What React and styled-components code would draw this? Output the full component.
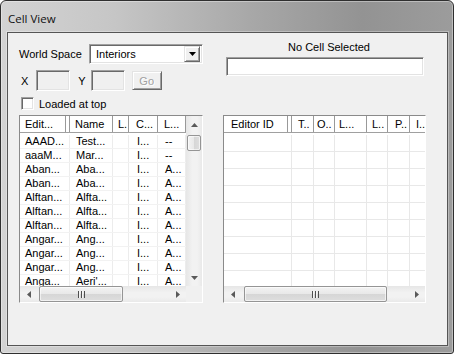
import React from "react";
import styled, { createGlobalStyle } from "styled-components";

const GlobalStyle = createGlobalStyle`
  html, body {
    margin: 0;
    padding: 0;
    background: #fff;
  }
  body {
    font-family: "Liberation Sans", Arial, sans-serif;
    font-size: 11px;
    color: #000;
  }
  * {
    box-sizing: border-box;
  }
`;

const Window = styled.div`
  width: 454px;
  height: 354px;
  display: flex;
  flex-direction: column;
  border: 1px solid #2f2f2f;
  border-radius: 6px 6px 3px 3px;
  background: linear-gradient(
    90deg,
    #d3d3d3 0%,
    #c6c6c6 25%,
    #a8a8a8 55%,
    #939393 80%,
    #9c9c9c 100%
  );
  box-shadow: inset 0 0 0 1px rgba(255, 255, 255, 0.35);
  overflow: hidden;
`;

const TitleBar = styled.div`
  flex: none;
  height: 31px;
  padding: 3px 0 0 7px;
  display: flex;
  align-items: center;
  font-family: "Open Sans", "Noto Sans", sans-serif;
  font-size: 11.5px;
  color: #111;
`;

const Client = styled.div`
  flex: 1;
  margin: 0 5px 7px 6px;
  padding: 8px 0 0 11px;
  display: flex;
  flex-direction: column;
  background: #f0f0f0;
  border: 1px solid #555;
  box-shadow: 0 0 0 1px rgba(255, 255, 255, 0.3);
`;

const TopArea = styled.div`
  display: grid;
  grid-template-columns: 184px 198px;
  column-gap: 23px;
`;

const Controls = styled.div`
  display: flex;
  flex-direction: column;
  padding-top: 3px;
`;

const Row = styled.div`
  display: flex;
  align-items: center;
  height: ${(p) => p.$h}px;
  margin-top: ${(p) => p.$mt || 0}px;
  justify-content: ${(p) => (p.$spread ? "space-between" : "flex-start")};
`;

const Label = styled.span`
  margin-left: ${(p) => p.$ml || 0}px;
  white-space: nowrap;
`;

const sunken = `
  border: 1px solid;
  border-color: #a0a0a0 #ffffff #ffffff #a0a0a0;
  box-shadow: inset 1px 1px 0 #696969, inset -1px -1px 0 #e3e3e3;
`;

const raised = `
  border: 1px solid;
  border-color: #e3e3e3 #696969 #696969 #e3e3e3;
  box-shadow: inset 1px 1px 0 #ffffff, inset -1px -1px 0 #a0a0a0;
`;

const Combo = styled.div`
  width: 114px;
  height: 20px;
  display: flex;
  align-items: center;
  justify-content: space-between;
  padding: 0 2px 0 6px;
  background: #fff;
  ${sunken}
`;

const DropButton = styled.div`
  width: 16px;
  height: 16px;
  display: flex;
  align-items: center;
  justify-content: center;
  background: #f0f0f0;
  ${raised}
`;

const Field = styled.div`
  width: 34px;
  height: 21px;
  margin-left: ${(p) => p.$ml}px;
  background: ${(p) => (p.$disabled ? "#f0f0f0" : "#fff")};
  ${sunken}
`;

const Button = styled.div`
  width: 30px;
  height: 19px;
  margin-left: 7px;
  display: flex;
  align-items: center;
  justify-content: center;
  background: #f0f0f0;
  color: #a0a0a0;
  text-shadow: 1px 1px 0 #fff;
  ${raised}
`;

const Check = styled.div`
  width: 13px;
  height: 13px;
  margin-left: 2px;
  background: #fff;
  ${sunken}
`;

const Selection = styled.div`
  display: flex;
  flex-direction: column;
`;

const Caption = styled.div`
  height: 13px;
  line-height: 13px;
  padding-left: 8px;
  text-align: center;
`;

const TextBox = styled.div`
  margin-top: 3px;
  height: 19px;
  background: #fff;
  ${sunken}
`;

const Lists = styled.div`
  display: flex;
  gap: 20px;
  margin-top: 5px;
  height: 188px;
`;

const ListView = styled.div`
  width: ${(p) => p.$w}px;
  height: 100%;
  display: grid;
  grid-template-columns: ${(p) => (p.$vscroll ? "1fr 16px" : "1fr")};
  grid-template-rows: 1fr 16px;
  border: 1px solid;
  border-color: #8a8a8a #ffffff #ffffff #8a8a8a;
  background: #fff;
`;

const Content = styled.div`
  display: flex;
  flex-direction: column;
  overflow: hidden;
  min-width: 0;
`;

const Header = styled.div`
  display: flex;
  flex: none;
  height: 17px;
  border-bottom: 1px solid #a0a0a0;
  background: #fff;
`;

const HeaderCell = styled.div`
  flex: ${(p) => (p.$w ? `0 0 ${p.$w}px` : "1")};
  padding-left: ${(p) => p.$pad}px;
  line-height: 16px;
  white-space: nowrap;
  overflow: hidden;
  border-right: ${(p) => (p.$w ? "1px solid #999" : "none")};
  box-shadow: ${(p) =>
    p.$dbl ? "inset -3px 0 0 #fff, inset -4px 0 0 #999" : "none"};
`;

const Body = styled.div`
  flex: 1;
  padding-top: 2px;
  overflow: hidden;
`;

const DataRow = styled.div`
  display: flex;
  height: ${(p) => p.$h}px;
  border-bottom: 1px solid ${(p) => p.$line};
`;

const Cell = styled.div`
  flex: ${(p) => (p.$w ? `0 0 ${p.$w}px` : "1")};
  padding-left: ${(p) => p.$pad}px;
  line-height: ${(p) => p.$h - 1}px;
  white-space: nowrap;
  overflow: hidden;
  border-right: ${(p) => (p.$w ? `1px solid ${p.$line}` : "none")};
`;

const Scroll = styled.div`
  display: flex;
  flex-direction: ${(p) => (p.$vertical ? "column" : "row")};
  background: ${(p) =>
    p.$vertical
      ? "linear-gradient(90deg, #e6e6e6, #f2f2f2 40%, #f2f2f2 70%, #e9e9e9)"
      : "linear-gradient(180deg, #e6e6e6, #f2f2f2 40%, #f2f2f2 70%, #e9e9e9)"};
  min-width: 0;
  min-height: 0;
`;

const ArrowBox = styled.div`
  flex: 0 0 17px;
  display: flex;
  align-items: center;
  justify-content: center;
`;

const Track = styled.div`
  flex: 1;
  display: flex;
  flex-direction: ${(p) => (p.$vertical ? "column" : "row")};
  align-items: stretch;
  padding: ${(p) => (p.$vertical ? "2px 0 0" : "0 0 0 " + p.$offset + "px")};
`;

const Thumb = styled.div`
  flex: 0 0 ${(p) => p.$size}px;
  display: flex;
  align-items: center;
  justify-content: center;
  margin: ${(p) => (p.$vertical ? "0 1px" : "0")};
  border: 1px solid #959595;
  border-radius: 2px;
  background: ${(p) =>
    p.$vertical
      ? "linear-gradient(90deg, #f3f3f3, #e8e8e8 50%, #d6d6d6 51%, #dedede)"
      : "linear-gradient(180deg, #f3f3f3, #e8e8e8 50%, #d6d6d6 51%, #dedede)"};
  box-shadow: inset 0 0 0 1px rgba(255, 255, 255, 0.6);
`;

const Grip = styled.div`
  width: 7px;
  height: 7px;
  background: repeating-linear-gradient(
    90deg,
    #4e4e4e 0 1px,
    #f4f4f4 1px 2px,
    transparent 2px 3px
  );
`;

const Corner = styled.div`
  background: #f0f0f0;
`;

const Arrow = ({ dir }) => {
  const pts = {
    up: "0,4 3.5,0 7,4",
    down: "0,0 7,0 3.5,4",
    left: "4,0 4,7 0,3.5",
    right: "0,0 0,7 4,3.5",
  }[dir];
  const vertical = dir === "up" || dir === "down";
  return (
    <svg width={vertical ? 7 : 4} height={vertical ? 4 : 7}>
      <polygon points={pts} fill="#5a5a5a" />
    </svg>
  );
};

const ComboArrow = () => (
  <svg width="7" height="4">
    <polygon points="0,0 7,0 3.5,4" fill="#000" />
  </svg>
);

const HScroll = ({ offset, size }) => (
  <Scroll>
    <ArrowBox>
      <Arrow dir="left" />
    </ArrowBox>
    <Track $offset={offset}>
      <Thumb $size={size}>
        <Grip />
      </Thumb>
    </Track>
    <ArrowBox>
      <Arrow dir="right" />
    </ArrowBox>
  </Scroll>
);

const VScroll = () => (
  <Scroll $vertical>
    <ArrowBox>
      <Arrow dir="up" />
    </ArrowBox>
    <Track $vertical>
      <Thumb $vertical $size={16} />
    </Track>
    <ArrowBox>
      <Arrow dir="down" />
    </ArrowBox>
  </Scroll>
);

const cellColumns = [
  { w: 50, label: "Edit...", pad: 5, body: 5, dbl: true },
  { w: 43, label: "Name", pad: 5, body: 6 },
  { w: 16, label: "L.", pad: 5, body: 6 },
  { w: 29, label: "C...", pad: 7, body: 8 },
  { w: 28, label: "L...", pad: 6, body: 7 },
];

const cells = [
  ["AAAD...", "Test...", "", "I...", "--"],
  ["aaaM...", "Mar...", "", "I...", "--"],
  ["Aban...", "Aba...", "", "I...", "A..."],
  ["Aban...", "Aba...", "", "I...", "A..."],
  ["Alftan...", "Alfta...", "", "I...", "A..."],
  ["Alftan...", "Alfta...", "", "I...", "A..."],
  ["Alftan...", "Alfta...", "", "I...", "A..."],
  ["Angar...", "Ang...", "", "I...", "A..."],
  ["Angar...", "Ang...", "", "I...", "A..."],
  ["Angar...", "Ang...", "", "I...", "A..."],
  ["Anga...", "Aeri'...", "", "I...", "A..."],
];

const refColumns = [
  { w: 68, label: "Editor ID", pad: 7, dbl: true },
  { w: 22, label: "T..", pad: 6 },
  { w: 21, label: "O..", pad: 3 },
  { w: 32, label: "L...", pad: 4 },
  { w: 21, label: "L..", pad: 5 },
  { w: 22, label: "P..", pad: 7 },
  { w: 0, label: "I..", pad: 6 },
];

const App = () => {
  return (
    <>
      <GlobalStyle />
      <Window>
        <TitleBar>Cell View</TitleBar>
        <Client>
          <TopArea>
            <Controls>
              <Row $h={20} $spread>
                <Label>World Space</Label>
                <Combo>
                  <span>Interiors</span>
                  <DropButton>
                    <ComboArrow />
                  </DropButton>
                </Combo>
              </Row>
              <Row $h={21} $mt={6}>
                <Label $ml={2}>X</Label>
                <Field $ml={8} $disabled />
                <Label $ml={8}>Y</Label>
                <Field $ml={5} $disabled />
                <Button>Go</Button>
              </Row>
              <Row $h={13} $mt={6}>
                <Check />
                <Label $ml={5}>Loaded at top</Label>
              </Row>
            </Controls>
            <Selection>
              <Caption>No Cell Selected</Caption>
              <TextBox />
            </Selection>
          </TopArea>

          <Lists>
            <ListView $w={184} $vscroll>
              <Content>
                <Header>
                  {cellColumns.map((c, i) => (
                    <HeaderCell key={i} $w={c.w} $pad={c.pad} $dbl={c.dbl}>
                      {c.label}
                    </HeaderCell>
                  ))}
                </Header>
                <Body>
                  {cells.map((row, r) => (
                    <DataRow key={r} $h={14} $line="#f2f2f2">
                      {row.map((v, i) => (
                        <Cell
                          key={i}
                          $w={cellColumns[i].w}
                          $pad={cellColumns[i].body}
                          $h={14}
                          $line="#ececec"
                        >
                          {v}
                        </Cell>
                      ))}
                    </DataRow>
                  ))}
                </Body>
              </Content>
              <VScroll />
              <HScroll offset={2} size={84} />
              <Corner />
            </ListView>

            <ListView $w={203}>
              <Content>
                <Header>
                  {refColumns.map((c, i) => (
                    <HeaderCell key={i} $w={c.w} $pad={c.pad} $dbl={c.dbl}>
                      {c.label}
                    </HeaderCell>
                  ))}
                </Header>
                <Body>
                  {Array.from({ length: 9 }).map((_, r) => (
                    <DataRow key={r} $h={17} $line="#e8e8e8">
                      {refColumns.map((c, i) => (
                        <Cell key={i} $w={c.w} $pad={0} $h={17} $line="#e8e8e8" />
                      ))}
                    </DataRow>
                  ))}
                </Body>
              </Content>
              <HScroll offset={3} size={143} />
            </ListView>
          </Lists>
        </Client>
      </Window>
    </>
  );
};

export default App;
